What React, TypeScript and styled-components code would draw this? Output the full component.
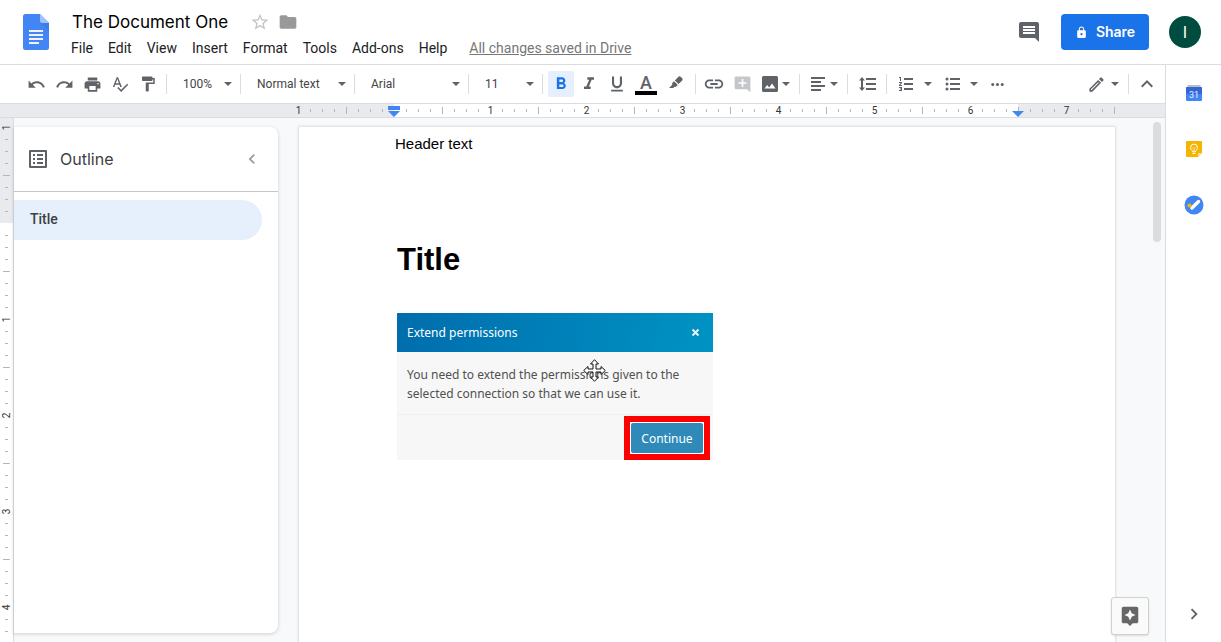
import React from "react";
import styled, { createGlobalStyle } from "styled-components";
import {
  MdAddComment,
  MdAssistant,
  MdChevronLeft,
  MdChevronRight,
  MdComment,
  MdFolder,
  MdFormatBold,
  MdFormatItalic,
  MdFormatPaint,
  MdFormatUnderlined,
  MdKeyboardArrowUp,
  MdLink,
  MdListAlt,
  MdLock,
  MdMoreHoriz,
  MdOutlineEdit,
  MdPrint,
  MdRedo,
  MdSpellcheck,
  MdStarBorder,
  MdUndo,
} from "react-icons/md";

const line = "#dadce0";
const ink = "#5f6368";
const blue = "#1a73e8";
const selected = "#e6f0fd";
const uiFont = `Roboto, "Liberation Sans", sans-serif`;
const brandFont = `Inter, Roboto, sans-serif`;

const GlobalStyle = createGlobalStyle`
  * { box-sizing: border-box; }
  body { margin: 0; background: #fff; font-family: ${uiFont}; color: #202124; overflow: hidden; }
  button, select, input { font: inherit; color: inherit; margin: 0; }
  svg { display: block; flex: none; }
`;

const Shell = styled.div`
  display: flex;
  flex-direction: column;
  height: 100vh;
`;

/* ---------- header ---------- */

const Header = styled.header`
  display: flex;
  align-items: center;
  height: 65px;
  padding-right: 20px;
  border-bottom: 1px solid ${line};
  flex: none;
`;

const LogoLink = styled.a`
  margin: 0 15px 0 23px;
`;

const HeaderText = styled.div`
  flex: 1;
  min-width: 0;
  padding-top: 4px;
`;

const TitleRow = styled.div`
  display: flex;
  align-items: center;
  height: 28px;
  padding-left: 8px;
`;

const DocName = styled.h1`
  margin: 0 18px 0 0;
  font: 400 17px/24px ${brandFont};
  color: #000;
  white-space: nowrap;
`;

const PlainButton = styled.button`
  display: flex;
  align-items: center;
  justify-content: center;
  padding: 0;
  border: 0;
  background: none;
  color: ${ink};
`;

const TitleButton = styled(PlainButton)<{ $tone: string }>`
  width: 28px;
  height: 24px;
  color: ${(p) => p.$tone};
`;

const MenuRow = styled.nav`
  display: flex;
  align-items: center;
  gap: 1px;
  height: 24px;
`;

const MenuButton = styled.button`
  padding: 0 7px;
  border: 0;
  background: none;
  font-size: 14px;
  line-height: 20px;
  color: #202124;
  white-space: nowrap;
`;

const SavedLink = styled.a`
  margin-left: 14px;
  font-size: 14px;
  line-height: 20px;
  color: #777;
  white-space: nowrap;
`;

const HeaderActions = styled.div`
  display: flex;
  align-items: center;
  gap: 20px;
`;

const ShareButton = styled.button`
  display: flex;
  align-items: center;
  justify-content: center;
  gap: 8px;
  width: 88px;
  height: 36px;
  padding: 0;
  border: 0;
  border-radius: 4px;
  background: ${blue};
  color: #fff;
  font: 600 14px/20px ${brandFont};
`;

const Avatar = styled.button`
  width: 32px;
  height: 32px;
  padding: 0;
  border: 0;
  border-radius: 50%;
  background: #004d40;
  color: #fff;
  font-size: 16px;
`;

/* ---------- frame ---------- */

const Body = styled.div`
  display: flex;
  flex: 1;
  min-height: 0;
`;

const Main = styled.main`
  display: flex;
  flex-direction: column;
  flex: 1;
  min-width: 0;
`;

const SidePanel = styled.aside`
  display: flex;
  flex-direction: column;
  align-items: center;
  width: 56px;
  padding-bottom: 16px;
  border-left: 1px solid ${line};
  flex: none;
`;

const AppButton = styled(PlainButton)`
  width: 56px;
  height: 56px;
`;

const PanelToggle = styled(PlainButton)`
  margin-top: auto;
  width: 24px;
  height: 24px;
`;

/* ---------- toolbar ---------- */

const Toolbar = styled.div`
  display: flex;
  align-items: center;
  height: 38px;
  padding: 0 4px 0 22px;
  flex: none;
`;

const Separator = styled.span`
  width: 1px;
  height: 20px;
  margin: 0 4px;
  background: ${line};
  flex: none;
`;

const Spacer = styled.span`
  flex: 1;
`;

const Tool = styled(PlainButton)<{ $on?: boolean; $wide?: boolean; $faded?: boolean }>`
  width: ${(p) => (p.$wide ? 28 : 26)}px;
  height: 26px;
  margin: 0 1px;
  border-radius: 2px;
  background: ${(p) => (p.$on ? selected : "none")};
  color: ${(p) => (p.$on ? blue : p.$faded ? "#c4c7c9" : ink)};
  flex: none;
`;

const MenuTool = styled(PlainButton)<{ $w: number; $gap: number }>`
  justify-content: flex-end;
  gap: ${(p) => p.$gap}px;
  width: ${(p) => p.$w}px;
  height: 26px;
  padding-right: 4px;
  flex: none;
`;

const Picker = styled.label<{ $w: number }>`
  display: flex;
  align-items: center;
  position: relative;
  width: ${(p) => p.$w}px;
  height: 26px;
  color: ${ink};
  flex: none;
  svg {
    position: absolute;
    right: 3px;
    pointer-events: none;
  }
`;

const Select = styled.select`
  appearance: none;
  width: 100%;
  height: 24px;
  padding: 0 16px 0 12px;
  border: 0;
  background: none;
  font-size: 12px;
  color: #444;
`;

const ColorLetter = styled.span`
  width: 22px;
  border-bottom: 4px solid #000;
  font-size: 18px;
  font-weight: 500;
  line-height: 17px;
  text-align: center;
`;

/* ---------- rulers ---------- */

const Ruler = styled.div`
  display: flex;
  height: 15px;
  border: 1px solid ${line};
  border-width: 1px 0;
  background: #e8eaed;
  flex: none;
`;

const RulerPart = styled.div<{ $page?: boolean; $lead?: boolean }>`
  display: flex;
  position: relative;
  background: ${(p) => (p.$page ? "#fff" : "transparent")};
  padding-left: ${(p) => (p.$lead ? 298 : 0)}px;
`;

const VRuler = styled.div`
  display: flex;
  flex-direction: column;
  width: 14px;
  border-right: 1px solid ${line};
  background: #fff;
  overflow: hidden;
  flex: none;
`;

const VRulerPart = styled.div<{ $margin?: boolean }>`
  padding-top: ${(p) => (p.$margin ? 9 : 0)}px;
  background: ${(p) => (p.$margin ? "#e8eaed" : "#fff")};
`;

const Cell = styled.span<{ $vertical?: boolean }>`
  display: flex;
  flex: none;
  flex-direction: ${(p) => (p.$vertical ? "column" : "row")};
  width: ${(p) => (p.$vertical ? 13 : 12)}px;
  height: ${(p) => (p.$vertical ? 12 : 13)}px;
`;

const Anchor = styled.span<{ $vertical?: boolean }>`
  display: flex;
  align-items: center;
  justify-content: center;
  width: ${(p) => (p.$vertical ? "13px" : "1px")};
  height: ${(p) => (p.$vertical ? "1px" : "13px")};
  flex: none;
`;

const Mark = styled.span<{ $vertical?: boolean; $half: boolean }>`
  width: ${(p) => (p.$vertical ? (p.$half ? 7 : 3) : 1)}px;
  height: ${(p) => (p.$vertical ? 1 : p.$half ? 7 : 3)}px;
  background: #b4b7ba;
  flex: none;
`;

const Num = styled.span<{ $vertical?: boolean }>`
  font-size: 10px;
  line-height: 13px;
  color: #333;
  flex: none;
  transform: ${(p) => (p.$vertical ? "rotate(-90deg)" : "none")};
`;

const Indent = styled.svg`
  position: absolute;
  left: -6px;
  top: 2px;
`;

/* ---------- workspace ---------- */

const Workspace = styled.div`
  display: flex;
  flex: 1;
  min-height: 0;
  position: relative;
  background: #f8f9fa;
`;

const Outline = styled.section`
  width: 264px;
  margin: 9px 0;
  border-radius: 0 8px 8px 0;
  background: #fff;
  box-shadow: 0 1px 3px 1px rgba(60, 64, 67, 0.15);
  flex: none;
`;

const OutlineHead = styled.header`
  display: flex;
  align-items: center;
  height: 65px;
  padding: 0 16px 0 12px;
  border-bottom: 1px solid #c6c6c6;
  color: ${ink};
`;

const OutlineName = styled.h2`
  flex: 1;
  margin: 0 0 0 10px;
  font: 400 16px/24px ${brandFont};
  color: #3c4043;
`;

const OutlineItem = styled.a`
  display: block;
  height: 40px;
  margin: 8px 16px 0 0;
  padding-left: 16px;
  border-radius: 0 20px 20px 0;
  background: ${selected};
  font-size: 14px;
  font-weight: 500;
  line-height: 39px;
  color: #3c4043;
  text-decoration: none;
`;

const Canvas = styled.div`
  flex: 1;
  min-width: 0;
  padding: 9px 0 0 21px;
  overflow: hidden;
`;

const Page = styled.article`
  width: 816px;
  height: 1056px;
  padding: 7px 96px 0;
  background: #fff;
  box-shadow: 0 0 2px 1px rgba(60, 64, 67, 0.15);
  font-family: "Liberation Sans", Arial, sans-serif;
  color: #000;
`;

const PageHeader = styled.p`
  margin: 0;
  font-size: 15px;
  line-height: 20px;
`;

const PageTitle = styled.h1`
  margin: 87px 0 34px 2px;
  font-size: 31px;
  font-weight: 700;
  line-height: 38px;
`;

const ScrollTrack = styled.div`
  width: 15px;
  padding: 4px 4px 0 3px;
  flex: none;
`;

const ScrollThumb = styled.div`
  height: 120px;
  border-radius: 4px;
  background: #dadce0;
`;

const Explore = styled(PlainButton)`
  position: absolute;
  right: 16px;
  bottom: 7px;
  width: 38px;
  height: 38px;
  border: 1px solid #d0d0d0;
  border-radius: 3px;
  background: #fafafa;
  color: #666;
  box-shadow: 0 1px 2px rgba(0, 0, 0, 0.12);
`;

/* ---------- embedded dialog figure ---------- */

const Dialog = styled.figure`
  position: relative;
  width: 316px;
  margin: 0 0 0 2px;
  background: #f7f7f7;
  font-family: "Noto Sans", "Open Sans", sans-serif;
`;

const DialogHead = styled.header`
  display: flex;
  align-items: center;
  justify-content: space-between;
  height: 39px;
  padding: 0 13px 0 10px;
  background: linear-gradient(100deg, #006dac, #0080b8 50%, #0093c4);
  color: #fff;
  font-size: 12px;
`;

const DialogText = styled.p`
  margin: 0;
  padding: 13px 10px 11px;
  border-bottom: 1px solid #f0f0f0;
  font-size: 12px;
  line-height: 19px;
  color: #505050;
  white-space: nowrap;
`;

const DialogFoot = styled.footer`
  display: flex;
  justify-content: flex-end;
  padding: 1px 3px 0 0;
`;

const Highlight = styled.div`
  padding: 1px;
  border: 6px solid #f00;
  background: #fff;
`;

const ContinueButton = styled.button`
  display: block;
  width: 72px;
  height: 30px;
  padding: 0;
  border: 0;
  border-radius: 2px;
  background: #2f8aba;
  color: #fff;
  font-size: 12px;
`;

const MoveCursor = styled.svg`
  position: absolute;
  left: 186px;
  top: 46px;
`;

/* ---------- drawings ---------- */

const DocsLogo = () => (
  <svg width="26" height="36" viewBox="0 0 26 36">
    <path d="M2.500 0H17l9 9v24.500a2.500 2.500 0 0 1-2.500 2.500h-21A2.500 2.500 0 0 1 0 33.500v-31A2.500 2.500 0 0 1 2.500 0z" fill="#4285f4" />
    <path d="M17 0l9 9h-6.500A2.500 2.500 0 0 1 17 6.500z" fill="#a1c2fa" />
    <path d="M18 9h8v8z" fill="#3b78e0" opacity=".6" />
    <path d="M6 16h14v2H6zM6 20h14v2H6zM6 24h14v2H6zM6 28h10v2H6z" fill="#f1f1f1" />
  </svg>
);

const Caret = () => (
  <svg width="10" height="6" viewBox="0 0 10 6">
    <path d="M1 1h8L5 5z" fill={ink} />
  </svg>
);

const Highlighter = () => (
  <svg width="18" height="18" viewBox="0 0 18 18" fill="currentColor">
    <path d="M11.200 1.900a1.800 1.800 0 0 1 2.500-.2l1.500 1.500a1.800 1.800 0 0 1-.2 2.500L11.500 9 7.900 5.400z" />
    <path d="M7.100 6.200l3.700 3.700-1.600 1.700a1.500 1.500 0 0 1-1.800.1L6.200 13H2l3.300-3.300a1.500 1.500 0 0 1 .2-1.900z" />
  </svg>
);

const Picture = () => (
  <svg width="18" height="18" viewBox="0 0 18 18">
    <path d="M2.500 1h13A1.500 1.500 0 0 1 17 2.500v13a1.500 1.500 0 0 1-1.500 1.500h-13A1.500 1.500 0 0 1 1 15.500v-13A1.500 1.500 0 0 1 2.500 1z" fill={ink} />
    <path d="M3.500 13.500l2.700-3.500 2 2.500L11 8.500l3.500 5z" fill="#fff" />
  </svg>
);

const AlignLeft = () => (
  <svg width="18" height="18" viewBox="0 0 18 18" fill="currentColor">
    <path d="M2 2h14v2H2zM2 6h10v2H2zM2 10h14v2H2zM2 14h10v2H2z" />
  </svg>
);

const LineSpacing = () => (
  <svg width="18" height="18" viewBox="0 0 18 18" fill="currentColor">
    <path d="M8 3h10v2H8zM8 8h10v2H8zM8 13h10v2H8z" />
    <path d="M4 2l3 3.500H5v7h2L4 16l-3-3.500h2v-7H1z" />
  </svg>
);

const NumberedList = () => (
  <svg width="18" height="18" viewBox="0 0 18 18" fill="currentColor">
    <path d="M7 3h9v2H7zM7 8h9v2H7zM7 13h9v2H7z" />
    <path d="M2 2h2v4H3V3H2zM2 7h3v1L3.300 10H5v1H2v-1l1.700-2H2zM2 12h3v4H2v-1h2v-.5H3v-1h1V13H2z" />
  </svg>
);

const BulletedList = () => (
  <svg width="18" height="18" viewBox="0 0 18 18" fill="currentColor">
    <path d="M7 3h10v2H7zM7 8h10v2H7zM7 13h10v2H7z" />
    <circle cx="4" cy="4" r="1.500" />
    <circle cx="4" cy="9" r="1.500" />
    <circle cx="4" cy="14" r="1.500" />
  </svg>
);

const Calendar = () => (
  <svg width="16" height="16" viewBox="0 0 16 16">
    <path d="M1.500 0h13v3h-13z" fill="#bdbdbd" />
    <path d="M0 3a1 1 0 0 1 1-1h14a1 1 0 0 1 1 1v12a1 1 0 0 1-1 1H1a1 1 0 0 1-1-1z" fill="#4285f4" />
    <path d="M0 3a1 1 0 0 1 1-1h14a1 1 0 0 1 1 1v6H0z" fill="#3367d6" />
    <text x="8" y="13" textAnchor="middle" fontSize="9" fontFamily="Roboto, sans-serif" fill="#e8f0fe">31</text>
  </svg>
);

const Keep = () => (
  <svg width="16" height="16" viewBox="0 0 16 16">
    <path d="M1 0h14a1 1 0 0 1 1 1v11l-4 4H1a1 1 0 0 1-1-1V1a1 1 0 0 1 1-1z" fill="#f4b400" />
    <path d="M12 16v-3a1 1 0 0 1 1-1h3z" fill="#fde293" />
    <path d="M6.500 9.800C5.300 9 4.600 8 4.600 6.500a3.400 3.400 0 0 1 6.800 0c0 1.500-.7 2.500-1.900 3.300v1h-3zM6.500 12.500h3" fill="none" stroke="#fff" strokeWidth="1" />
    <path d="M7 6.500l1 1 1-1M8 7.500V10" fill="none" stroke="#fff" strokeWidth=".7" />
  </svg>
);

const Tasks = () => (
  <svg width="20" height="20" viewBox="0 0 20 20">
    <circle cx="10" cy="10" r="9.500" fill="#4285f4" />
    <path d="M8 13l6.500-6.500" stroke="#fff" strokeWidth="3.400" strokeLinecap="round" />
    <circle cx="5.500" cy="10.500" r="2.100" fill="#f4b400" />
  </svg>
);

/* ---------- ruler data ---------- */

const Ticks = ({ from, to, vertical }: { from: number; to: number; vertical?: boolean }) => (
  <>
    {Array.from({ length: to - from }, (_, n) => {
      const i = from + n;
      const whole = i % 8 === 0;
      return (
        <Cell key={i} $vertical={vertical}>
          <Anchor $vertical={vertical}>
            {whole && i !== 0 && <Num $vertical={vertical}>{Math.abs(i / 8)}</Num>}
            {!whole && <Mark $vertical={vertical} $half={i % 4 === 0} />}
          </Anchor>
        </Cell>
      );
    })}
  </>
);

const MENUS = ["File", "Edit", "View", "Insert", "Format", "Tools", "Add-ons", "Help"];

const PickerBox = ({ label, value, w }: { label: string; value: string; w: number }) => (
  <Picker $w={w}>
    <Select aria-label={label} defaultValue={value}>
      <option>{value}</option>
    </Select>
    <Caret />
  </Picker>
);

export default function App() {
  return (
    <Shell>
      <GlobalStyle />
      <Header>
        <LogoLink href="#" aria-label="Docs home">
          <DocsLogo />
        </LogoLink>
        <HeaderText>
          <TitleRow>
            <DocName>The Document One</DocName>
            <TitleButton $tone="#c4c4c4" aria-label="Star">
              <MdStarBorder size={20} />
            </TitleButton>
            <TitleButton $tone="#999" aria-label="Move to folder">
              <MdFolder size={20} />
            </TitleButton>
          </TitleRow>
          <MenuRow>
            {MENUS.map((m) => (
              <MenuButton key={m}>{m}</MenuButton>
            ))}
            <SavedLink href="#">All changes saved in Drive</SavedLink>
          </MenuRow>
        </HeaderText>
        <HeaderActions>
          <PlainButton aria-label="Comments">
            <MdComment size={24} />
          </PlainButton>
          <ShareButton>
            <MdLock size={13} />
            Share
          </ShareButton>
          <Avatar aria-label="Account">I</Avatar>
        </HeaderActions>
      </Header>

      <Body>
        <Main>
          <Toolbar role="toolbar">
            <Tool aria-label="Undo"><MdUndo size={19} /></Tool>
            <Tool aria-label="Redo"><MdRedo size={19} /></Tool>
            <Tool aria-label="Print"><MdPrint size={19} /></Tool>
            <Tool aria-label="Spelling"><MdSpellcheck size={18} /></Tool>
            <Tool aria-label="Paint format"><MdFormatPaint size={18} /></Tool>
            <Separator />
            <PickerBox label="Zoom" value="100%" w={65} />
            <Separator />
            <PickerBox label="Styles" value="Normal text" w={105} />
            <Separator />
            <PickerBox label="Font" value="Arial" w={105} />
            <Separator />
            <PickerBox label="Font size" value="11" w={65} />
            <Separator />
            <Tool $on aria-label="Bold"><MdFormatBold size={20} /></Tool>
            <Tool aria-label="Italic"><MdFormatItalic size={20} /></Tool>
            <Tool aria-label="Underline"><MdFormatUnderlined size={20} /></Tool>
            <Tool $wide aria-label="Text color"><ColorLetter>A</ColorLetter></Tool>
            <Tool $wide aria-label="Highlight color"><Highlighter /></Tool>
            <Separator />
            <Tool aria-label="Insert link"><MdLink size={22} /></Tool>
            <Tool $faded aria-label="Add comment"><MdAddComment size={19} /></Tool>
            <MenuTool $w={39} $gap={2} aria-label="Insert image"><Picture /><Caret /></MenuTool>
            <Separator />
            <MenuTool $w={39} $gap={2} aria-label="Align"><AlignLeft /><Caret /></MenuTool>
            <Separator />
            <Tool $wide aria-label="Line spacing"><LineSpacing /></Tool>
            <Separator />
            <MenuTool $w={46} $gap={8} aria-label="Numbered list"><NumberedList /><Caret /></MenuTool>
            <MenuTool $w={46} $gap={8} aria-label="Bulleted list"><BulletedList /><Caret /></MenuTool>
            <Tool aria-label="More"><MdMoreHoriz size={19} /></Tool>
            <Spacer />
            <MenuTool $w={46} $gap={4} aria-label="Editing mode"><MdOutlineEdit size={19} /><Caret /></MenuTool>
            <Separator />
            <Tool aria-label="Hide the menus"><MdKeyboardArrowUp size={24} /></Tool>
          </Toolbar>

          <Ruler>
            <RulerPart $lead>
              <Ticks from={-8} to={0} />
            </RulerPart>
            <RulerPart $page>
              <Ticks from={0} to={52} />
              <Indent width="12" height="12" viewBox="0 0 12 12">
                <path d="M0 0h12v4H0zM0 5h12L6 11z" fill="#4285f4" />
              </Indent>
            </RulerPart>
            <RulerPart>
              <Ticks from={52} to={61} />
              <Indent width="12" height="12" viewBox="0 0 12 12">
                <path d="M0 5h12L6 11z" fill="#4285f4" />
              </Indent>
            </RulerPart>
          </Ruler>

          <Workspace>
            <VRuler>
              <VRulerPart $margin>
                <Ticks vertical from={-8} to={0} />
              </VRulerPart>
              <VRulerPart>
                <Ticks vertical from={0} to={40} />
              </VRulerPart>
            </VRuler>
            <Outline>
              <OutlineHead>
                <MdListAlt size={24} />
                <OutlineName>Outline</OutlineName>
                <PlainButton aria-label="Close outline">
                  <MdChevronLeft size={20} color="#999" />
                </PlainButton>
              </OutlineHead>
              <OutlineItem href="#title">Title</OutlineItem>
            </Outline>
            <Canvas>
              <Page>
                <PageHeader>Header text</PageHeader>
                <PageTitle id="title">Title</PageTitle>
                <Dialog>
                  <DialogHead>
                    Extend permissions
                    <svg width="9" height="9" viewBox="0 0 9 9">
                      <path d="M1.500 1.500l6 6M7.500 1.500l-6 6" stroke="#e3f2fa" strokeWidth="2" />
                    </svg>
                  </DialogHead>
                  <DialogText>
                    You need to extend the permissions given to the
                    <br />
                    selected connection so that we can use it.
                  </DialogText>
                  <DialogFoot>
                    <Highlight>
                      <ContinueButton>Continue</ContinueButton>
                    </Highlight>
                  </DialogFoot>
                  <MoveCursor width="23" height="23" viewBox="0 0 23 23">
                    <path
                      d="M11.500 .7l4 4.300h-2.500v5h5V7.500l4.300 4-4.300 4V13h-5v5h2.500l-4 4.300-4-4.300H10v-5H5v2.500l-4.300-4 4.300-4V10h5V5H7.500z"
                      fill="#fff"
                      stroke="#111"
                      strokeWidth="1"
                    />
                  </MoveCursor>
                </Dialog>
              </Page>
            </Canvas>
            <ScrollTrack>
              <ScrollThumb />
            </ScrollTrack>
            <Explore aria-label="Explore">
              <MdAssistant size={22} />
            </Explore>
          </Workspace>
        </Main>

        <SidePanel>
          <AppButton aria-label="Calendar"><Calendar /></AppButton>
          <AppButton aria-label="Keep"><Keep /></AppButton>
          <AppButton aria-label="Tasks"><Tasks /></AppButton>
          <PanelToggle aria-label="Hide side panel"><MdChevronRight size={22} /></PanelToggle>
        </SidePanel>
      </Body>
    </Shell>
  );
}
